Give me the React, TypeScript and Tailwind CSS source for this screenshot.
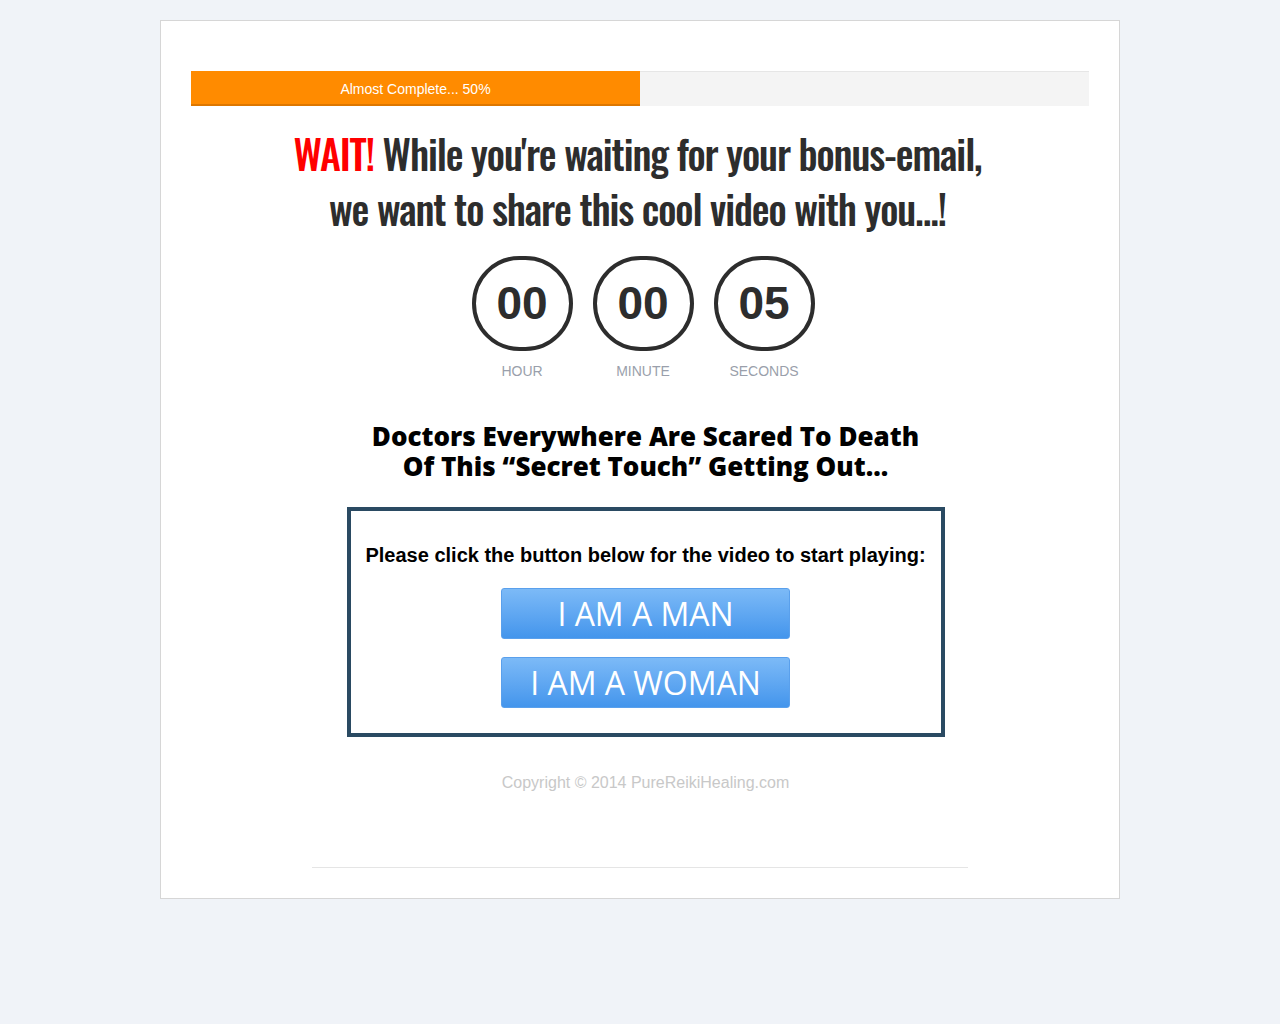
import React from "react";

const counters = [
  { value: "00", label: "HOUR" },
  { value: "00", label: "MINUTE" },
  { value: "05", label: "SECONDS" },
];

function ChoiceButton({ label }: { label: string }) {
  return (
    <button className="flex h-[51px] w-[289px] items-center justify-center rounded-[3px] border border-[#5aa0ec] bg-gradient-to-b from-[#7cbaf7] to-[#4395ec] font-['Open_Sans',sans-serif] text-[32px] leading-none text-white">
      {label}
    </button>
  );
}

export default function App() {
  return (
    <div className="min-h-[1024px] bg-[#f0f3f8] pt-5 font-['Liberation_Sans',Arial,sans-serif]">
      <div className="mx-auto w-[960px] border border-[#d6d6d6] bg-white px-[30px] pb-[30px] pt-[50px]">
        {/* progress */}
        <div className="flex h-[35px] w-full border-t border-[#e6e6e6] bg-[#f4f4f4]">
          <div className="-mt-px flex h-[35px] w-1/2 items-center justify-center border-b-2 border-[#dd7700] bg-[#ff8b00] pt-[3px] text-[14px] text-white">
            Almost Complete... 50%
          </div>
        </div>

        <h1 className="mt-[20px] pr-[5px] text-center font-['Oswald','Liberation_Sans_Narrow','DejaVu_Sans_Condensed',sans-serif] text-[40px] font-medium leading-[55px] tracking-[-1.1px] text-[#2d2d2d]">
          <span className="text-[#ff0000]">WAIT!</span> While you're waiting for your bonus-email,
          <br />
          we want to share this cool video with you...!
        </h1>

        <div className="mt-[20px] flex justify-center gap-[21px] pl-[6px]">
          {counters.map((c) => (
            <div key={c.label} className="flex w-[100px] flex-col items-center">
              <div className="flex h-[95px] w-[101px] items-center justify-center rounded-full border-4 border-[#2d2d2d] text-[46px] font-bold text-[#2d2d2d]">
                {c.value}
              </div>
              <div className="mt-[10px] text-[14px] text-[#9a9fab]">{c.label}</div>
            </div>
          ))}
        </div>

        <div className="pl-[11px]">
          <h2 className="mt-[39px] text-center font-['Open_Sans',sans-serif] text-[26px] font-extrabold leading-[30px] text-black">
            Doctors Everywhere Are Scared To Death
            <br />
            Of This “Secret Touch” Getting Out...
          </h2>

          <div className="mx-auto mt-[26px] flex w-[598px] flex-col items-center border-4 border-[#2a4a62] pb-[25px] pt-[29px]">
            <p className="text-[20px] font-bold text-black">
              Please click the button below for the video to start playing:
            </p>
            <div className="mt-[18px] flex flex-col gap-[18px]">
              <ChoiceButton label="I AM A MAN" />
              <ChoiceButton label="I AM A WOMAN" />
            </div>
          </div>

          <p className="mt-[34px] text-center text-[16px] text-[#c8c8c8]">
            Copyright © 2014 PureReikiHealing.com
          </p>
        </div>

        <hr className="mx-auto mt-[72px] w-[656px] border-t border-[#e5e5e5]" />
      </div>
    </div>
  );
}
